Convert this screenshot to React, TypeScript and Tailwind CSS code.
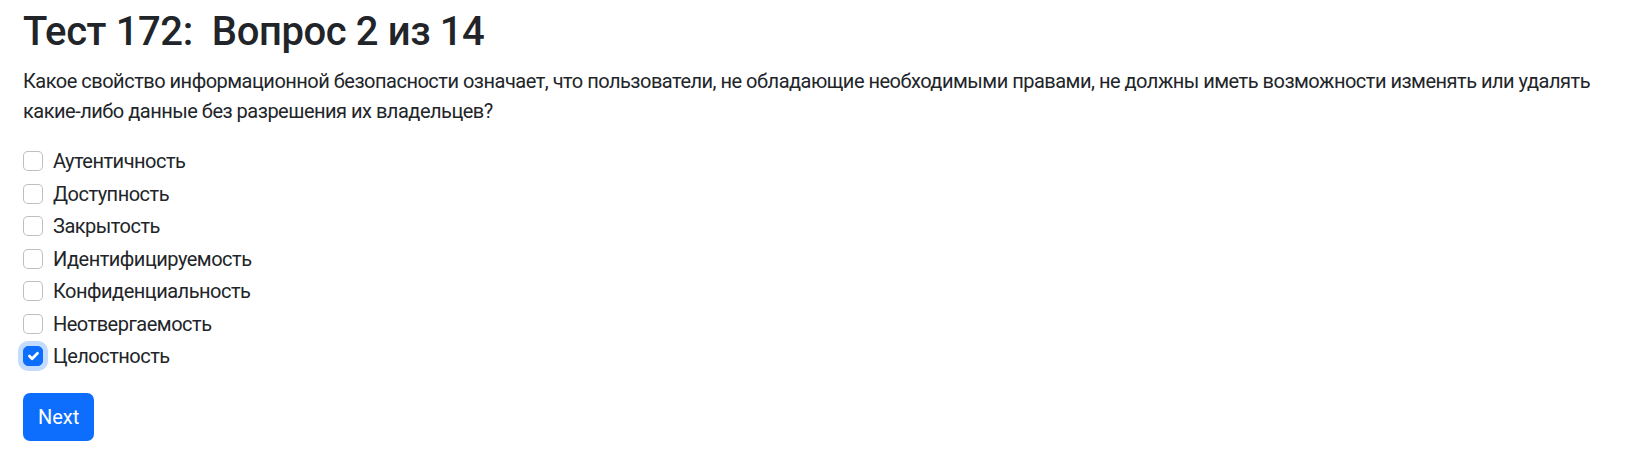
import { useState } from 'react'

const options = [
  'Аутентичность',
  'Доступность',
  'Закрытость',
  'Идентифицируемость',
  'Конфиденциальность',
  'Неотвергаемость',
  'Целостность',
]

function CheckRow({ label, checked, onToggle }: { label: string; checked: boolean; onToggle: () => void }) {
  return (
    <label className="flex items-start min-h-[30px] mb-[2.5px] cursor-pointer select-none">
      <span
        onClick={onToggle}
        className={
          checked
            ? 'relative mt-[5px] w-5 h-5 shrink-0 rounded-[5px] border border-[#0d6efd] bg-[#0d6efd] shadow-[0_0_0_5px_rgba(13,110,253,0.25)] flex items-center justify-center'
            : 'relative mt-[5px] w-5 h-5 shrink-0 rounded-[5px] border border-black/25 bg-white'
        }
      >
        {checked && (
          <svg viewBox="0 0 20 20" className="w-[18px] h-[18px]">
            <path d="m6 10 3 3 6-6" fill="none" stroke="#fff" strokeWidth="3" strokeLinecap="round" strokeLinejoin="round" />
          </svg>
        )}
      </span>
      <span className="ml-[10px]">{label}</span>
    </label>
  )
}

export default function App() {
  const [picked, setPicked] = useState<string[]>(['Целостность'])

  const toggle = (o: string) =>
    setPicked(p => (p.includes(o) ? p.filter(x => x !== o) : [...p, o]))

  return (
    <div className="min-h-screen bg-white text-[#212529] text-[20px] leading-[30px] tracking-[-0.025em] font-['Roboto',sans-serif] pl-[23px] pr-[4px] pt-[8px]">
      {/* Heading */}
      <h2 className="text-[40px] leading-[48px] font-medium mb-[10px] whitespace-pre tracking-[-0.01em]">
        Тест 172:  Вопрос 2 из 14
      </h2>

      {/* Question */}
      <p className="mb-[20px]">
        Какое свойство информационной безопасности означает, что пользователи, не обладающие необходимыми правами, не должны иметь возможности изменять или удалять какие-либо данные без разрешения их владельцев?
      </p>

      {/* Answers */}
      <div className="flex flex-col">
        {options.map(o => (
          <CheckRow key={o} label={o} checked={picked.includes(o)} onToggle={() => toggle(o)} />
        ))}
      </div>

      <button className="mt-[19px] h-[48px] px-[15px] rounded-[7px] bg-[#0d6efd] text-white text-[20px] leading-[30px] tracking-normal">
        Next
      </button>
    </div>
  )
}
